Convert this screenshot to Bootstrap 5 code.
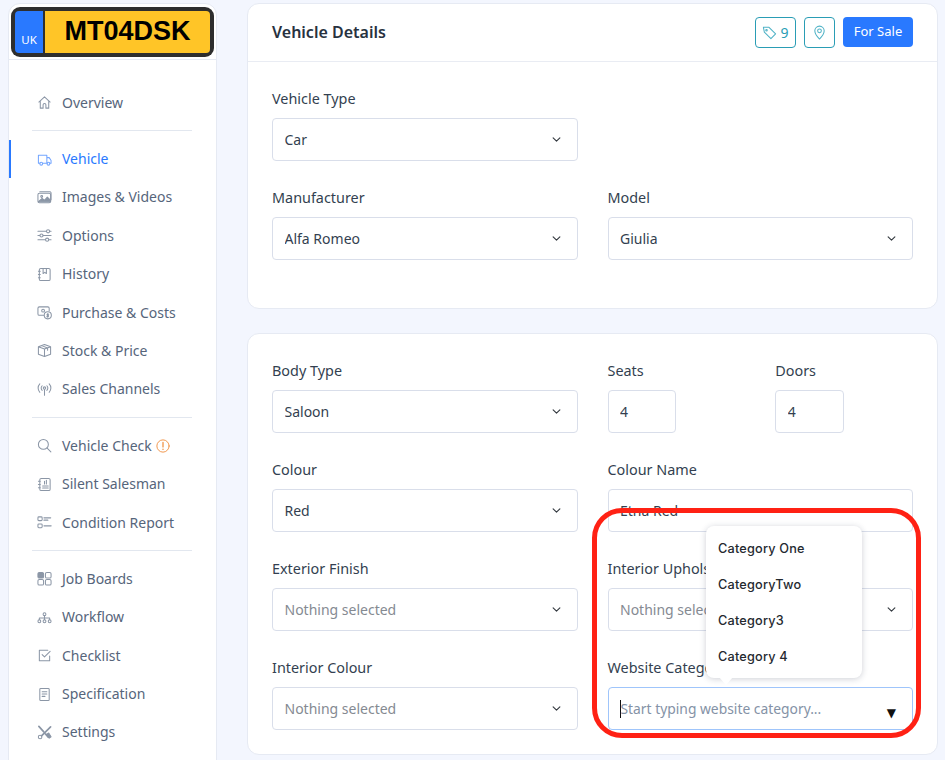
<!doctype html>
<html lang="en">
<head>
<meta charset="utf-8">
<title>Vehicle Details</title>
<link href="https://cdn.jsdelivr.net/npm/bootstrap@5.3.0/dist/css/bootstrap.min.css" rel="stylesheet">
<style>
html,body{height:760px;overflow:hidden}
body{background:#f3f6fe;font-family:"Noto Sans","Open Sans",sans-serif;font-size:14px;color:#333f50}
.shell{padding:3px 8px 0 8px;height:760px}
.side-panel{width:209px;flex:none;height:790px;background:#fff;border:1px solid #e6eaf3;border-radius:12px;overflow:hidden}
.side-top{height:56px;padding:3px 2px 0 2px;border-bottom:1px solid #e6eaf3}
.plate{height:50px;background:#2e2e2e;border-radius:9px;padding:4px;display:flex}
.plate-uk{width:28px;background:#2979ff;color:#fff;font-size:11.5px;border-radius:4px 0 0 4px;display:flex;align-items:flex-end;justify-content:center;padding-bottom:5px;line-height:16px}
.plate-no{flex:1;margin-left:2px;background:#ffc527;color:#000;border-radius:0 4px 4px 0;font-family:"Liberation Sans",sans-serif;font-weight:700;font-size:27px;text-align:center;line-height:41px}
.side-nav{padding:23.45px 0 0}
.side-link{height:38.4px;display:flex;align-items:center;padding-left:26px;color:#56657b;text-decoration:none;font-size:14px;border-left:3px solid transparent;margin-left:-1px;line-height:20px}
.side-link svg{width:15px;height:15px;flex:none;margin-right:10px;fill:none;stroke:#8b96a6;stroke-width:1.1;stroke-linecap:round;stroke-linejoin:round}
.side-link.on{color:#2979ff;border-left-color:#2979ff}
.side-link.on svg{stroke:#74a6ff}
.side-rule{height:1px;background:#e2e7ef;margin:8px 24px 9px 23px}
.warn{width:14px!important;height:14px!important;margin:0 0 0 4px!important;stroke:#f0954a!important}
.main-col{width:691px;flex:none;margin-left:30px}
.panel{background:#fff;border:1px solid #e6eaf3;border-radius:12px}
.panel-one{height:306px;margin-bottom:24px}
.panel-two{height:422px;position:relative;padding:27px 24px 0}
.panel-head{height:58px;padding:0 24px;border-bottom:1px solid #e9ecf3}
.panel-title{font-size:16px;font-weight:600;color:#28323f;margin:0}
.panel-body{padding:27px 24px 0}
.tool-btn{height:31px;border:1px solid #2a9db5;border-radius:4px;color:#2a9db5;background:#fff;font-size:14px;display:flex;align-items:center;justify-content:center;padding:0}
.tool-btn svg{width:15px;height:15px;fill:none;stroke:#4fb2c6;stroke-width:1.1;stroke-linecap:round;stroke-linejoin:round}
.tool-tag{width:41px;gap:3px}
.tool-pin{width:31px}
.sale-btn{width:70px;height:30px;padding:0;background:#2979ff;border:0;border-radius:4px;font-size:13px;color:#fff;margin-top:-1px}
.fld{margin-bottom:27px}
.fld-label{display:block;height:19px;line-height:19px;margin-bottom:10px;font-size:14.4px;color:#333f50}
.fld-box{height:43px;border:1px solid #d9deea;border-radius:4px;font-size:14px;color:#333f50;padding:0 11.5px;box-shadow:none;font-family:inherit}
.form-select.fld-box{background-size:9px;background-position:right 16px center}
.form-select.none{color:#858a92}
.narrow{width:68px}
.narrow-b{width:69px}
.row-g{--bs-gutter-x:30px}
.cat-wrap{position:relative}
.cat-input{border-color:#9fc5fb;padding-left:11px;background:#fff;display:flex;align-items:center;justify-content:space-between;padding-right:16px}
.cat-ph{color:#8492a6;border-left:1px solid #111;line-height:18px;font-size:13.85px}
.cat-tri{color:#111;font-size:12px;line-height:1;margin-top:8px;font-family:"DejaVu Sans",sans-serif}
.cat-pop{position:absolute;left:113px;bottom:52px;width:156px;padding:4px 0;background:#fff;border-radius:8px;box-shadow:0 1px 6px rgba(30,40,70,.22);z-index:5;margin:0;list-style:none}
.cat-pop::after{content:"";position:absolute;left:13px;bottom:-7px;border-left:7.5px solid transparent;border-right:7.5px solid transparent;border-top:8px solid #fff}
.cat-pop li{height:36px;line-height:37px;padding-left:12.5px;font-family:Inter,sans-serif;font-size:12.7px;font-weight:500;letter-spacing:.2px;color:#24292f}
.ring{position:absolute;left:344px;top:174px;width:329px;height:230px;border:5px solid #ff2114;border-radius:30px;z-index:6;pointer-events:none}
</style>
</head>
<body>
<div class="shell d-flex align-items-start">
  <aside class="side-panel">
    <div class="side-top">
      <div class="plate"><div class="plate-uk">UK</div><div class="plate-no">MT04DSK</div></div>
    </div>
    <nav class="side-nav">
      <a class="side-link" href="#"><svg viewBox="0 0 16 16"><path d="M2 7.5 8 2l6 5.500M3.500 6.500V14h3v-3.500a1.500 1.500 0 0 1 3 0V14h3V6.500"/></svg>Overview</a>
      <div class="side-rule"></div>
      <a class="side-link on" href="#"><svg viewBox="0 0 16 16"><path d="M3 12H1.500V3.500h9V12H6M10.500 6H13l2 3v3h-1.500M10.500 12h.5"/><circle cx="4.500" cy="12.500" r="1.500"/><circle cx="12.200" cy="12.500" r="1.500"/></svg>Vehicle</a>
      <a class="side-link" href="#"><svg viewBox="0 0 16 16"><rect x="1" y="3.500" width="13.500" height="10" rx="1.500"/><path d="M3 1.800h11a1.500 1.500 0 0 1 1 1.500v7"/><circle cx="5" cy="7" r="1"/><path d="m1.500 12.500 4-3.500 2.500 2 3-3.500 3.500 3.500v1.500z" fill="#8b96a6"/></svg>Images &amp; Videos</a>
      <a class="side-link" href="#"><svg viewBox="0 0 16 16"><path d="M1 3.500h9M13.500 3.500H15M1 8h2M6.500 8H15M1 12.500h8M12.500 12.500H15"/><circle cx="11.800" cy="3.500" r="1.700"/><circle cx="4.800" cy="8" r="1.700"/><circle cx="10.800" cy="12.500" r="1.700"/></svg>Options</a>
      <a class="side-link" href="#"><svg viewBox="0 0 16 16"><rect x="2.500" y="1.500" width="11.500" height="13" rx="1.500"/><path d="M1.500 4.500h2M1.500 8h2M1.500 11.500h2M6.500 2v5l1.800-1.300L10 7V2"/></svg>History</a>
      <a class="side-link" href="#"><svg viewBox="0 0 16 16"><path d="M7 11H2.500A1.500 1.500 0 0 1 1 9.500v-6A1.500 1.500 0 0 1 2.500 2h9A1.500 1.500 0 0 1 13 3.500V6"/><circle cx="6.500" cy="6" r="1.500"/><circle cx="11.500" cy="11" r="3.800"/><path d="M11.500 9v4M12.500 9.800h-1.500a.8.800 0 0 0 0 1.300h1a.8.800 0 0 1 0 1.300h-1.500"/></svg>Purchase &amp; Costs</a>
      <a class="side-link" href="#"><svg viewBox="0 0 16 16"><path d="M8 1.500 14.500 4v8L8 14.500 1.500 12V4zM1.500 4 8 6.500 14.500 4M8 6.500v8M5 2.800l6.300 2.500v2.500"/></svg>Stock &amp; Price</a>
      <a class="side-link" href="#"><svg viewBox="0 0 16 16"><circle cx="8" cy="6.500" r="1.300"/><path d="M8 8v6M5.500 9a3.500 3.500 0 0 1 0-5M10.500 4a3.500 3.500 0 0 1 0 5M3 11a6.500 6.500 0 0 1 0-9M13 2a6.500 6.500 0 0 1 0 9"/></svg>Sales Channels</a>
      <div class="side-rule"></div>
      <a class="side-link" href="#"><svg viewBox="0 0 16 16"><circle cx="6.800" cy="6.800" r="5.300"/><path d="m10.800 10.800 4 4"/></svg>Vehicle Check<svg class="warn" viewBox="0 0 16 16"><circle cx="8" cy="8" r="7"/><path d="M8 4v5M8 11.500v.4" stroke-width="1.500"/></svg></a>
      <a class="side-link" href="#"><svg viewBox="0 0 16 16"><rect x="3" y="1.500" width="11" height="13" rx="1.500"/><path d="M1.500 4.500h2M1.500 8h2M1.500 11.500h2M8 4.500v3M10 3.500v4M6 9.500h6M6 11.800h6"/></svg>Silent Salesman</a>
      <a class="side-link" href="#"><svg viewBox="0 0 16 16"><rect x="1" y="2" width="4.500" height="4" rx="1"/><rect x="1" y="9.500" width="4.500" height="4" rx="1"/><path d="M7.500 3h7M7.500 5.500h4M7.500 11.500h7.500" stroke-width="1.400"/></svg>Condition Report</a>
      <div class="side-rule"></div>
      <a class="side-link" href="#"><svg viewBox="0 0 16 16"><rect x="1" y="1.500" width="6" height="6" rx="1.500" fill="#8b96a6"/><rect x="9" y="1.500" width="6" height="6" rx="1.500"/><rect x="1" y="9" width="6" height="6" rx="1.500"/><rect x="9" y="9" width="6" height="6" rx="1.500"/></svg>Job Boards</a>
      <a class="side-link" href="#"><svg viewBox="0 0 16 16"><circle cx="8" cy="4.500" r="1.500"/><circle cx="2.500" cy="12" r="1.500"/><circle cx="8" cy="12" r="1.500"/><circle cx="13.500" cy="12" r="1.500"/><path d="M8 6v4.500M2.500 10.500V8.500h11v2"/></svg>Workflow</a>
      <a class="side-link" href="#"><svg viewBox="0 0 16 16"><path d="M13.500 8.500v5h-11v-11h9"/><path d="m5.500 7 2.500 2.500L14 3.500"/></svg>Checklist</a>
      <a class="side-link" href="#"><svg viewBox="0 0 16 16"><rect x="3" y="1.500" width="10" height="13" rx="1"/><path d="M5.500 5h5M5.500 7.500h5M5.500 10h3"/></svg>Specification</a>
      <a class="side-link" href="#"><svg viewBox="0 0 16 16"><path d="M2 1.500 7 7M9 9.500l3 3.500M14.500 2 4.800 11.500" stroke-width="1.800"/><circle cx="3.300" cy="12.800" r="1.900"/><path d="m10 10 2.500-1.500 2.500 4-2 1.500z" fill="#8b96a6"/></svg>Settings</a>
    </nav>
  </aside>
  <main class="main-col">
    <section class="panel panel-one">
      <div class="panel-head d-flex align-items-center justify-content-between">
        <h5 class="panel-title">Vehicle Details</h5>
        <div class="d-flex align-items-center gap-2">
          <button class="tool-btn tool-tag" type="button"><svg viewBox="0 0 16 16"><path d="M1.500 2.500h6l7 7-5 5-7-7z"/><circle cx="4.800" cy="5.500" r=".8"/></svg>9</button>
          <button class="tool-btn tool-pin" type="button"><svg viewBox="0 0 16 16"><path d="M8 15S3 10 3 6.200a5 5 0 0 1 10 0C13 10 8 15 8 15z"/><circle cx="8" cy="6.200" r="2"/></svg></button>
          <button class="btn sale-btn" type="button">For Sale</button>
        </div>
      </div>
      <div class="panel-body">
        <div class="row row-g">
          <div class="col-6 fld"><label class="fld-label">Vehicle Type</label><select class="form-select fld-box"><option>Car</option></select></div>
        </div>
        <div class="row row-g">
          <div class="col-6 fld"><label class="fld-label">Manufacturer</label><select class="form-select fld-box"><option>Alfa Romeo</option></select></div>
          <div class="col-6 fld"><label class="fld-label">Model</label><select class="form-select fld-box"><option>Giulia</option></select></div>
        </div>
      </div>
    </section>
    <section class="panel panel-two">
      <div class="row row-g">
        <div class="col-6 fld"><label class="fld-label">Body Type</label><select class="form-select fld-box"><option>Saloon</option></select></div>
        <div class="col-3 fld"><label class="fld-label">Seats</label><input class="form-control fld-box narrow" value="4"></div>
        <div class="col-3 fld"><label class="fld-label">Doors</label><input class="form-control fld-box narrow-b" value="4"></div>
      </div>
      <div class="row row-g">
        <div class="col-6 fld"><label class="fld-label">Colour</label><select class="form-select fld-box"><option>Red</option></select></div>
        <div class="col-6 fld"><label class="fld-label">Colour Name</label><input class="form-control fld-box" value="Etna Red"></div>
      </div>
      <div class="row row-g">
        <div class="col-6 fld"><label class="fld-label">Exterior Finish</label><select class="form-select fld-box none"><option>Nothing selected</option></select></div>
        <div class="col-6 fld"><label class="fld-label">Interior Upholstery</label><select class="form-select fld-box none"><option>Nothing selected</option></select></div>
      </div>
      <div class="row row-g">
        <div class="col-6 fld"><label class="fld-label">Interior Colour</label><select class="form-select fld-box none"><option>Nothing selected</option></select></div>
        <div class="col-6 fld cat-wrap"><label class="fld-label">Website Category</label>
          <div class="fld-box cat-input"><span class="cat-ph">Start typing website category...</span><span class="cat-tri">▼</span></div>
          <ul class="cat-pop"><li>Category One</li><li>CategoryTwo</li><li>Category3</li><li>Category 4</li></ul>
        </div>
      </div>
      <div class="ring"></div>
    </section>
  </main>
</div>
<script src="https://cdn.jsdelivr.net/npm/bootstrap@5.3.0/dist/js/bootstrap.bundle.min.js"></script>
</body>
</html>
